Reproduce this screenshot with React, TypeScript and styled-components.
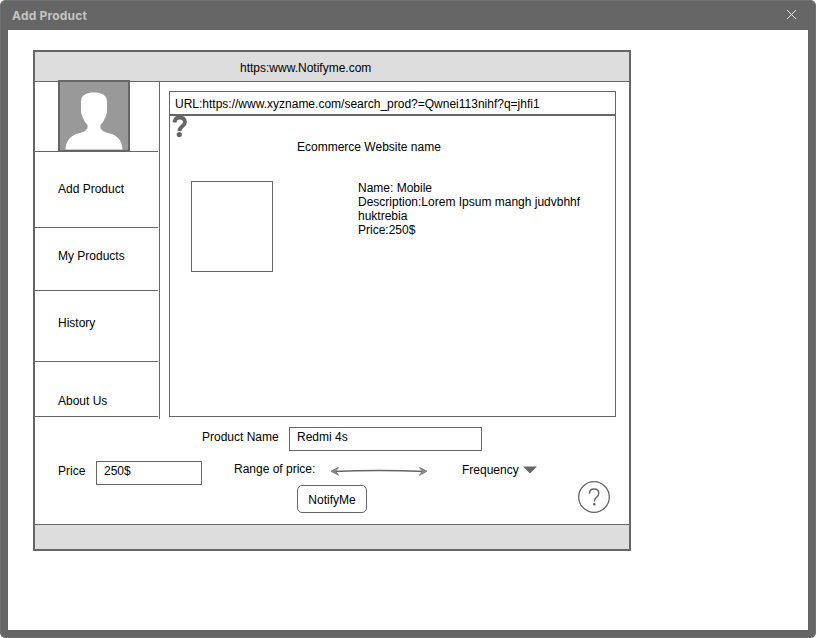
import React from "react";
import styled, { createGlobalStyle } from "styled-components";

const line = "#666666";

const GlobalStyle = createGlobalStyle`
  * { box-sizing: border-box; }
  body { margin: 0; background: #fff; overflow: hidden; }
`;

const Window = styled.div`
  display: flex;
  flex-direction: column;
  width: 816px;
  height: 638px;
  padding: 0 8px 8px;
  background: ${line};
  border-radius: 6px;
  box-shadow: inset 0 0 0 1px #707070;
  font: 12px/14px "Liberation Sans", Arial, sans-serif;
  color: #000;
  white-space: nowrap;
`;

const TitleBar = styled.header`
  display: flex;
  flex: 0 0 30px;
  justify-content: space-between;
  align-items: flex-start;
  padding: 9px 11px 0 4px;
  color: #c3c3c3;
  font: 700 12px/14px Inter, sans-serif;
  letter-spacing: 0.2px;
`;

const CloseIcon = styled.svg`
  display: block;
  width: 11px;
  height: 11px;
`;

const Canvas = styled.div`
  flex: 1;
  padding: 20px 25px;
  background: #fff;
`;

const Browser = styled.div`
  display: flex;
  flex-direction: column;
  width: 598px;
  height: 501px;
  border: 2px solid ${line};
`;

const AddressStrip = styled.div`
  flex: 0 0 30px;
  padding: 9px 0 0 205px;
  background: #ddd;
  border-bottom: 1px solid ${line};
`;

const BottomStrip = styled.div`
  flex: 0 0 25px;
  background: #ddd;
  border-top: 1px solid ${line};
`;

const Body = styled.div`
  display: flex;
  flex: 0 0 337px;
`;

const Sidebar = styled.nav`
  flex: 0 0 125px;
  border-right: 1px solid ${line};
`;

const Cell = styled.div<{ $height: number; $top: number }>`
  display: flow-root;
  width: 123px;
  height: ${(p) => p.$height}px;
  padding: ${(p) => p.$top}px 0 0 23px;
  border-bottom: 1px solid ${line};
`;

const Avatar = styled.svg`
  display: block;
  position: relative;
  width: 72px;
  height: 72px;
  margin-top: -2px;
`;

const Page = styled.main`
  width: 447px;
  height: 326px;
  margin: 9px 0 0 9px;
  border: 1px solid ${line};
`;

const UrlField = styled.div`
  height: 24px;
  padding: 5px 0 0 5px;
  border-bottom: 2px solid ${line};
`;

const PageHeading = styled.div`
  display: flex;
  height: 65px;
`;

const HelpMark = styled.svg`
  flex: 0 0 22px;
  width: 22px;
  height: 24px;
`;

const SiteName = styled.div`
  padding: 24px 0 0 105px;
`;

const Product = styled.section`
  display: flex;
  gap: 85px;
  padding-left: 21px;
`;

const Thumbnail = styled.div`
  width: 82px;
  height: 91px;
  border: 1px solid ${line};
`;

const Details = styled.div`
  width: 240px;
  white-space: normal;
`;

const Form = styled.div`
  flex: 1;
  padding-top: 8px;
`;

const Row = styled.div<{ $left: number; $gap?: number }>`
  display: flex;
  align-items: flex-start;
  height: 24px;
  margin-bottom: ${(p) => p.$gap ?? 0}px;
  padding-left: ${(p) => p.$left}px;
`;

const Label = styled.span<{ $width: number; $top: number }>`
  flex: 0 0 ${(p) => p.$width}px;
  padding-top: ${(p) => p.$top}px;
`;

const Field = styled.div<{ $width: number; $after?: number }>`
  width: ${(p) => p.$width}px;
  height: 24px;
  margin-right: ${(p) => p.$after ?? 0}px;
  padding: 2px 0 0 7px;
  border: 1px solid ${line};
`;

const RangeArrow = styled.svg`
  flex: 0 0 100px;
  width: 100px;
  height: 20px;
  margin-right: 33px;
`;

const Caret = styled.svg`
  width: 14px;
  height: 8px;
  margin-top: 5px;
`;

const Button = styled.button`
  width: 70px;
  height: 28px;
  margin: 0 211px 0 0;
  padding: 1px 0 0;
  border: 1px solid ${line};
  border-radius: 5px;
  background: #fff;
  color: #000;
  font: inherit;
`;

const HelpCircle = styled.svg`
  width: 32px;
  height: 32px;
  margin-top: -4px;
`;

const menu = [
  { label: "Add Product", height: 76, top: 30 },
  { label: "My Products", height: 63, top: 21 },
  { label: "History", height: 71, top: 25 },
  { label: "About Us", height: 55, top: 32 },
];

export default function App() {
  return (
    <>
      <GlobalStyle />
      <Window>
        <TitleBar>
          Add Product
          <CloseIcon viewBox="0 0 11 11">
            <path d="M1 1L10 10M10 1L1 10" stroke="#eee" strokeWidth="1" />
          </CloseIcon>
        </TitleBar>
        <Canvas>
          <Browser>
            <AddressStrip>https:www.Notifyme.com</AddressStrip>
            <Body>
              <Sidebar>
                <Cell $height={70} $top={0}>
                  <Avatar viewBox="0 0 72 72">
                    <rect x="1" y="1" width="70" height="70" fill="#999" stroke={line} strokeWidth="2" />
                    <path
                      d="M23 22C23 15 28 12.5 36 12.5S49 15 49 22V28Q49.500 33 47.500 37Q45.500 42 42.500 45V48C44 52 49 52.500 54 54C61 57 64 62 64.500 69.500H7.500C8 62 11 57 18 54C23 52.500 28 52 29.500 48V45Q26.500 42 24.500 37Q22.500 33 23 28Z"
                      fill="#fff"
                    />
                  </Avatar>
                </Cell>
                {menu.map((m) => (
                  <Cell key={m.label} $height={m.height} $top={m.top}>
                    {m.label}
                  </Cell>
                ))}
              </Sidebar>
              <Page>
                <UrlField>URL:https://www.xyzname.com/search_prod?=Qwnei113nihf?q=jhfi1</UrlField>
                <PageHeading>
                  <HelpMark viewBox="0 0 22 24">
                    <path
                      d="M4.500 6.500C5 2.500 7 1.500 9.500 1.500C13 1.500 15 3.500 15 6C15 10.500 9.500 10 9.500 15"
                      fill="none"
                      stroke={line}
                      strokeWidth="3.900"
                    />
                    <circle cx="9.300" cy="18.600" r="2.600" fill={line} />
                  </HelpMark>
                  <SiteName>Ecommerce Website name</SiteName>
                </PageHeading>
                <Product>
                  <Thumbnail />
                  <Details>
                    <div>Name: Mobile</div>
                    <div>Description:Lorem Ipsum mangh judvbhhf huktrebia</div>
                    <div>Price:250$</div>
                  </Details>
                </Product>
              </Page>
            </Body>
            <Form>
              <Row $left={167} $gap={10}>
                <Label $width={87} $top={3}>Product Name</Label>
                <Field $width={193}>Redmi 4s</Field>
              </Row>
              <Row $left={23}>
                <Label $width={38} $top={3}>Price</Label>
                <Field $width={106} $after={32}>250$</Field>
                <Label $width={95} $top={1}>Range of price:</Label>
                <RangeArrow viewBox="0 0 100 20">
                  <path d="M4 10.500Q50 8.500 96 10.500" fill="none" stroke="#666" strokeWidth="1.300" />
                  <path
                    d="M9.500 6.500L2 10.300L9.500 14.200L6.500 10.300ZM90.500 6.500L98 10.300L90.500 14.200L93.500 10.300Z"
                    fill="#888"
                    stroke="#808080"
                    strokeWidth="1"
                  />
                </RangeArrow>
                <Label $width={61} $top={2}>Frequency</Label>
                <Caret viewBox="0 0 14 8">
                  <path d="M0 .5H14L7 7.500Z" fill={line} />
                </Caret>
              </Row>
              <Row $left={262}>
                <Button>NotifyMe</Button>
                <HelpCircle viewBox="0 0 32 32" fill="none" stroke={line}>
                  <circle cx="16" cy="16" r="15.300" strokeWidth="1.300" />
                  <path d="M11.500 12.700C11.500 9.500 13.500 8 16 8S20.800 9.500 20.800 12.400C20.800 16 16.300 16 16.300 20.500" strokeWidth="1.400" />
                  <circle cx="16.300" cy="23.300" r="1.300" fill={line} stroke="none" />
                </HelpCircle>
              </Row>
            </Form>
            <BottomStrip />
          </Browser>
        </Canvas>
      </Window>
    </>
  );
}
